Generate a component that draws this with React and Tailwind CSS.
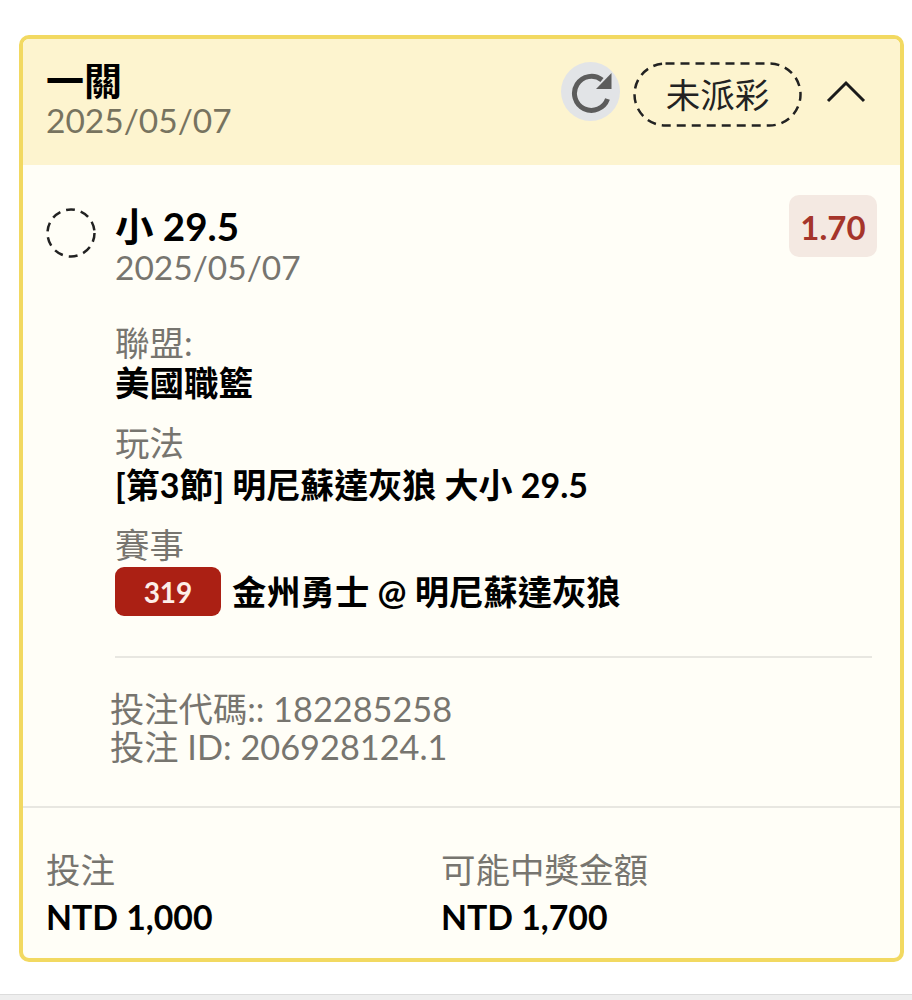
import React from 'react';

const Field = ({ label, children }) => (
    <div className="mb-[20px]">
        <p className="text-[34.5px] leading-[40px] text-[#77756f]">{label}</p>
        {children}
    </div>
);

const App = () => {
    return (
        <div className="w-[912px] h-[1000px] bg-white flex flex-col font-['Lato','Noto_Sans_CJK_TC',sans-serif] overflow-hidden">
            <div className="flex-1 pt-[35px] pl-[19px] pr-[8px]">
                <div className="h-[927px] border-[4px] border-[#f2d961] rounded-[10px] bg-[#fffef7] overflow-hidden flex flex-col">
                    {/* Header */}
                    <div className="h-[126px] bg-[#fdf4cf] pl-[23px] pr-[32px] pt-[21px] flex justify-between shrink-0">
                        <div>
                            <h1 className="text-[38px] leading-[40px] font-bold text-black">一關</h1>
                            <p className="text-[33.500px] leading-[40px] text-[#77735f]">2025/05/07</p>
                        </div>
                        <div className="flex items-start gap-[13px] pt-[2px]">
                            <div className="w-[59px] h-[59px] rounded-full bg-[#e2e4e7] flex items-center justify-center">
                                <svg width="44" height="44" viewBox="0 0 44 44" fill="none">
                                    <path d="M38.500 29A17 17 0 1 1 33 10" stroke="#5c5c5c" strokeWidth="5" />
                                    <path d="M42.500 3v16H27z" fill="#5c5c5c" />
                                </svg>
                            </div>
                            <div className="relative w-[169px] h-[65px] flex items-center justify-center text-[34.500px] text-[#222]">
                                <svg className="absolute inset-0" width="169" height="65" viewBox="0 0 169 65" fill="none">
                                    <rect x="1.500" y="1.500" width="166" height="62" rx="31" stroke="#222" strokeWidth="2.500" strokeDasharray="9 6" />
                                </svg>
                                未派彩
                            </div>
                            <svg className="ml-[9px] mt-[9px]" width="44" height="44" viewBox="0 0 44 44" fill="none">
                                <path d="M4 30 L22 12 L40 30" stroke="#1a1a1a" strokeWidth="3" />
                            </svg>
                        </div>
                    </div>

                    {/* Body */}
                    <div className="flex-1 border-b-2 border-[#e8e7e1] pl-[23px] pr-[23px] pt-[30px] flex">
                        <svg className="mt-[13px] shrink-0" width="50" height="50" viewBox="0 0 50 50" fill="none">
                            <circle cx="25" cy="25" r="23.500" stroke="#222" strokeWidth="2.500" strokeDasharray="9 6" />
                        </svg>
                        <div className="flex-1 ml-[19px]">
                            <div className="flex justify-between">
                                <div className="pt-[9px]">
                                    <h2 className="text-[38.500px] leading-[44px] font-bold text-black">小 29.5</h2>
                                    <p className="text-[33.500px] leading-[38px] text-[#77756f]">2025/05/07</p>
                                </div>
                                <div className="w-[88px] h-[62px] pt-[3px] rounded-[10px] bg-[#f4e9e2] flex items-center justify-center text-[33px] font-bold text-[#a5352b]">
                                    1.70
                                </div>
                            </div>
                            <div className="mt-[37px]">
                                <Field label="聯盟:">
                                    <p className="text-[34.500px] leading-[40px] font-bold text-black">美國職籃</p>
                                </Field>
                                <Field label="玩法">
                                    <p className="mt-[2px] text-[34px] leading-[40px] font-bold text-black">[第3節] 明尼蘇達灰狼 大小 29.5</p>
                                </Field>
                                <Field label="賽事">
                                    <div className="flex items-center gap-[11px] mt-[1px]">
                                        <span className="w-[106px] h-[49px] rounded-[9px] bg-[#ab2014] flex items-center justify-center text-[28px] font-bold text-[#fdeee8]">319</span>
                                        <span className="text-[34.300px] font-bold text-black">金州勇士 @ 明尼蘇達灰狼</span>
                                    </div>
                                </Field>
                            </div>
                            <div className="h-[2px] bg-[#e8e7e1] mt-[39px] mr-[5px]" />
                            <div className="mt-[32px] -ml-[5px] text-[34.300px] leading-[38px] text-[#77756f]">
                                <p>投注代碼:: 182285258</p>
                                <p>投注 ID: 206928124.1</p>
                            </div>
                        </div>
                    </div>

                    {/* Footer */}
                    <div className="h-[150px] shrink-0 pl-[23px] pt-[40px] flex">
                        <div className="w-[395px]">
                            <p className="text-[34.500px] leading-[44px] text-[#77756f]">投注</p>
                            <p className="mt-[1px] text-[33.800px] leading-[48px] font-bold text-black">NTD 1,000</p>
                        </div>
                        <div>
                            <p className="text-[34.500px] leading-[44px] text-[#77756f]">可能中獎金額</p>
                            <p className="mt-[1px] text-[33.800px] leading-[48px] font-bold text-black">NTD 1,700</p>
                        </div>
                    </div>
                </div>
            </div>
            <div className="h-[6px] bg-[#eeeeee] border-t border-[#dcdcdc]" />
        </div>
    );
};

export default App;
